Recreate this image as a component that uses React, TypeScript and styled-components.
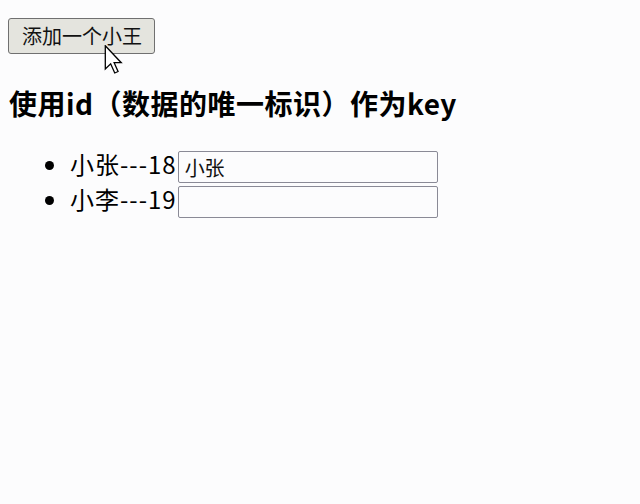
import React from 'react'
import styled, { createGlobalStyle } from 'styled-components'

const GlobalStyle = createGlobalStyle`
  html, body {
    margin: 0;
    padding: 0;
    background: #fcfcfd;
  }
  body {
    font-family: 'Noto Sans CJK SC', 'Noto Sans', sans-serif;
    color: #000;
  }
`

const Page = styled.div`
  position: relative;
  width: 640px;
  height: 504px;
  padding: 18px 8px 0;
  box-sizing: border-box;
`

const AddButton = styled.button`
  height: 36px;
  padding: 0 12px 0 13px;
  font-family: 'Noto Sans CJK SC', sans-serif;
  font-size: 20px;
  color: #111;
  background: #e4e4de;
  border: 1px solid #707070;
  border-radius: 3px;
  line-height: 34px;
`

const Title = styled.h3`
  margin: 32px 0 0 1px;
  font-size: 28px;
  font-weight: 700;
  line-height: 34px;
  letter-spacing: 0.5px;
`

const List = styled.ul`
  margin: 26px 0 0;
  padding-left: 62px;
`

const Item = styled.li`
  height: 35px;
  font-size: 24px;
  line-height: 35px;
  letter-spacing: 1px;
`

const NameInput = styled.input`
  width: 260px;
  height: 32px;
  box-sizing: border-box;
  margin: 0 0 0 1px;
  padding: 0 6px;
  vertical-align: middle;
  font-family: 'Noto Sans CJK SC', sans-serif;
  font-size: 20px;
  color: #111;
  background: #fcfcfd;
  border: 1px solid #8a8a96;
  border-radius: 2px;
  outline: none;
`

const Cursor = styled.svg`
  position: absolute;
  left: 104px;
  top: 45px;
`

const people = [
  { id: '001', name: '小张', age: 18, value: '小张' },
  { id: '002', name: '小李', age: 19, value: '' },
]

const App = () => {
  return (
    <Page>
      <GlobalStyle />
      <AddButton>添加一个小王</AddButton>
      <Title>使用id（数据的唯一标识）作为key</Title>
      <List>
        {people.map((p) => (
          <Item key={p.id}>
            {p.name}---{p.age}
            <NameInput type="text" defaultValue={p.value} />
          </Item>
        ))}
      </List>
      {/* mouse pointer over the button */}
      <Cursor width="20" height="29" viewBox="0 0 13 20">
        <path
          d="M0.5 0.5 L0.5 16.5 L4.2 13 L7 19.3 L9.3 18.3 L6.6 12.2 L11.5 12.2 Z"
          fill="#fff"
          stroke="#000"
          strokeWidth="0.9"
          strokeLinejoin="miter"
        />
      </Cursor>
    </Page>
  )
}

export default App
